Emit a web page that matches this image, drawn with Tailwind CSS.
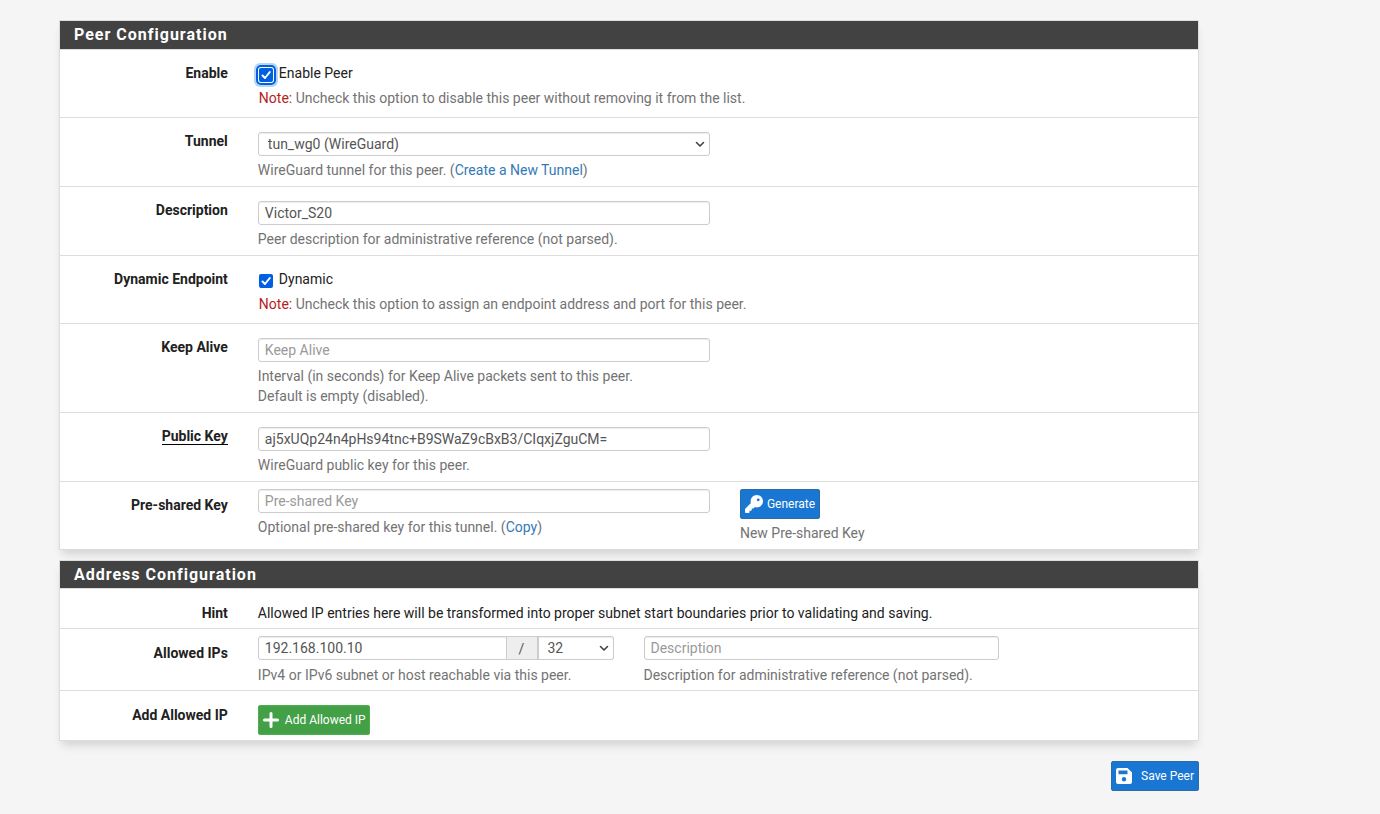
<!DOCTYPE html>
<html lang="en">
<head>
<meta charset="utf-8">
<meta name="viewport" content="width=device-width, initial-scale=1">
<title>Peer Configuration</title>
<script src="https://cdn.jsdelivr.net/npm/@tailwindcss/browser@4"></script>
</head>
<body class="bg-[#f5f5f5] font-[Roboto,sans-serif] text-sm leading-5 text-[#212121]">
<form class="ml-[59px] max-w-[1140px] pt-5">

  <section class="border border-[#ddd] bg-white shadow-[0_7px_9px_-3px_rgba(0,0,0,0.15)]">
    <h2 class="h-[29px] border-b border-[#ddd] bg-[#424242] px-[14px] text-base leading-7 font-bold tracking-[1px] text-white">Peer Configuration</h2>

    <div class="border-b border-[#ddd]">
      <div class="-mr-[9px] -ml-[10px] grid grid-cols-12 pt-[13px] pb-[9px]">
        <label for="enable" class="col-span-2 px-[15px] text-right font-bold">Enable</label>
        <div class="col-span-10 px-[15px]">
          <label class="flex items-center pl-px">
            <span class="mt-1 grid h-3.5 w-3.5 shrink-0">
              <input id="enable" type="checkbox" checked class="col-start-1 row-start-1 h-3.5 w-3.5 appearance-none rounded-[2px] bg-[#0060df] shadow-[0_0_0_1px_#fff,0_0_0_3px_#0060df,0_0_0_5px_#b3d7f8]">
              <svg class="pointer-events-none col-start-1 row-start-1 h-3.5 w-3.5" viewBox="0 0 14 14" fill="none" stroke="#fff" stroke-width="2" stroke-linecap="round" stroke-linejoin="round"><path d="M3.5 7.5L6 10l4.800-6"/></svg>
            </span>
            <span class="ml-[6px]">Enable Peer</span>
          </label>
          <p class="mt-[5px] pl-px text-[#737373]"><span class="text-[#b71c1c]">Note:</span> Uncheck this option to disable this peer without removing it from the list.</p>
        </div>
      </div>
    </div>

    <div class="border-b border-[#ddd]">
      <div class="-mr-[9px] -ml-[10px] grid grid-cols-12 pt-[13px] pb-1.5">
        <label for="tunnel" class="col-span-2 px-[15px] text-right font-bold">Tunnel</label>
        <div class="col-span-5 px-[15px] pt-px">
          <div class="grid">
            <select id="tunnel" class="col-start-1 row-start-1 h-6 w-full appearance-none rounded-[3px] border border-[#ccc] bg-white pl-[9px] pr-6 leading-5 text-[#555] shadow-[inset_0_1px_1px_rgba(0,0,0,0.075)]"><option>tun_wg0 (WireGuard)</option></select>
            <svg class="pointer-events-none col-start-1 row-start-1 mr-[5px] h-2.5 w-2.5 self-center justify-self-end" viewBox="0 0 10 10" fill="none" stroke="#444" stroke-width="1.600" stroke-linecap="round" stroke-linejoin="round"><path d="M1.500 3.500L5 7l3.500-3.500"/></svg>
          </div>
          <p class="mt-1 text-[#737373]">WireGuard tunnel for this peer. (<a href="#" class="text-[#337ab7]">Create a New Tunnel</a>)</p>
        </div>
      </div>
    </div>

    <div class="border-b border-[#ddd]">
      <div class="-mr-[9px] -ml-[10px] grid grid-cols-12 pt-[13px] pb-1.5">
        <label for="descr" class="col-span-2 px-[15px] text-right font-bold">Description</label>
        <div class="col-span-5 px-[15px] pt-px">
          <input id="descr" type="text" value="Victor_S20" class="block h-6 w-full rounded-[3px] border border-[#ccc] bg-white px-1.5 pb-px text-[#555] shadow-[inset_0_1px_1px_rgba(0,0,0,0.075)]">
          <p class="mt-1 text-[#737373]">Peer description for administrative reference (not parsed).</p>
        </div>
      </div>
    </div>

    <div class="border-b border-[#ddd]">
      <div class="-mr-[9px] -ml-[10px] grid grid-cols-12 pt-[13px] pb-[9px]">
        <label for="dynamic" class="col-span-2 px-[15px] text-right font-bold">Dynamic Endpoint</label>
        <div class="col-span-10 px-[15px]">
          <label class="flex items-center pl-px">
            <span class="mt-1 grid h-3.5 w-3.5 shrink-0">
              <input id="dynamic" type="checkbox" checked class="col-start-1 row-start-1 h-3.5 w-3.5 appearance-none rounded-[2px] bg-[#0060df]">
              <svg class="pointer-events-none col-start-1 row-start-1 h-3.5 w-3.5" viewBox="0 0 14 14" fill="none" stroke="#fff" stroke-width="2" stroke-linecap="round" stroke-linejoin="round"><path d="M3.5 7.5L6 10l4.800-6"/></svg>
            </span>
            <span class="ml-[6px]">Dynamic</span>
          </label>
          <p class="mt-[5px] pl-px text-[#737373]"><span class="text-[#b71c1c]">Note:</span> Uncheck this option to assign an endpoint address and port for this peer.</p>
        </div>
      </div>
    </div>

    <div class="border-b border-[#ddd]">
      <div class="-mr-[9px] -ml-[10px] grid grid-cols-12 pt-[13px] pb-1.5">
        <label for="keepalive" class="col-span-2 px-[15px] text-right font-bold">Keep Alive</label>
        <div class="col-span-5 px-[15px] pt-px">
          <input id="keepalive" type="text" placeholder="Keep Alive" class="block h-6 w-full rounded-[3px] border border-[#ccc] bg-white px-1.5 pb-px text-[#555] shadow-[inset_0_1px_1px_rgba(0,0,0,0.075)] placeholder:text-[#999]">
          <p class="mt-1 text-[#737373]">Interval (in seconds) for Keep Alive packets sent to this peer.<br>Default is empty (disabled).</p>
        </div>
      </div>
    </div>

    <div class="border-b border-[#ddd]">
      <div class="-mr-[9px] -ml-[10px] grid grid-cols-12 pt-[13px] pb-1.5">
        <label for="pubkey" class="col-span-2 px-[15px] text-right font-bold"><span class="border-b border-black">Public Key</span></label>
        <div class="col-span-5 px-[15px] pt-px">
          <input id="pubkey" type="text" value="aj5xUQp24n4pHs94tnc+B9SWaZ9cBxB3/CIqxjZguCM=" class="block h-6 w-full rounded-[3px] border border-[#ccc] bg-white px-1.5 pb-px text-[#555] shadow-[inset_0_1px_1px_rgba(0,0,0,0.075)]">
          <p class="mt-1 text-[#737373]">WireGuard public key for this peer.</p>
        </div>
      </div>
    </div>

    <div class="-mr-[9px] -ml-[10px] grid grid-cols-12 pt-[7px] pb-1.5">
      <label for="psk" class="col-span-2 px-[15px] pt-1.5 text-right font-bold">Pre-shared Key</label>
      <div class="col-span-5 px-[15px]">
        <input id="psk" type="text" placeholder="Pre-shared Key" class="block h-6 w-full rounded-[3px] border border-[#ccc] bg-white px-1.5 pb-px text-[#555] shadow-[inset_0_1px_1px_rgba(0,0,0,0.075)] placeholder:text-[#999]">
        <p class="mt-1 text-[#737373]">Optional pre-shared key for this tunnel. (<a href="#" class="text-[#337ab7]">Copy</a>)</p>
      </div>
      <div class="col-span-5 px-[15px]">
        <button type="button" class="flex h-[30px] items-center gap-1 rounded-[2px] border border-[#2e6da4] bg-[#1976d2] px-1 text-xs text-white">
          <svg class="h-[18px] w-[18px]" viewBox="0 0 512 512" fill="#fff"><path d="M336 352c97.200 0 176-78.800 176-176S433.200 0 336 0S160 78.800 160 176c0 18.700 2.900 36.800 8.300 53.700L7 391c-4.500 4.500-7 10.600-7 17v80c0 13.300 10.700 24 24 24h80c13.300 0 24-10.700 24-24v-40h40c13.300 0 24-10.700 24-24v-40h40c6.400 0 12.500-2.500 17-7l33.300-33.300c16.900 5.400 35 8.300 53.700 8.300zM376 96a40 40 0 1 1 0 80 40 40 0 1 1 0-80z"/></svg>
          Generate
        </button>
        <p class="mt-1 text-[#737373]">New Pre-shared Key</p>
      </div>
    </div>
  </section>

  <section class="mt-[10px] border border-[#ddd] bg-white shadow-[0_7px_9px_-3px_rgba(0,0,0,0.15)]">
    <h2 class="h-7 border-b border-[#ddd] bg-[#424242] px-[14px] text-base leading-7 font-bold tracking-[1px] text-white">Address Configuration</h2>

    <div class="border-b border-[#ddd]">
      <div class="-mr-[9px] -ml-[10px] grid grid-cols-12 pt-3.5 pb-[5px]">
        <div class="col-span-2 px-[15px] text-right font-bold">Hint</div>
        <p class="col-span-10 px-[15px]">Allowed IP entries here will be transformed into proper subnet start boundaries prior to validating and saving.</p>
      </div>
    </div>

    <div class="border-b border-[#ddd]">
      <div class="-mr-[9px] -ml-[10px] grid grid-cols-12 pt-[7px] pb-[5px]">
        <label for="address" class="col-span-2 px-[15px] pt-[7px] text-right font-bold">Allowed IPs</label>
        <div class="col-span-4 px-[15px]">
          <div class="flex">
            <input id="address" type="text" value="192.168.100.10" class="h-6 min-w-0 flex-1 rounded-l-[3px] border border-[#ccc] bg-white px-1.5 text-[#555] shadow-[inset_0_1px_1px_rgba(0,0,0,0.075)]">
            <span class="h-6 w-[30px] border-y border-[#ccc] bg-[#eee] text-center leading-6 text-[#555]">/</span>
            <span class="grid w-[77px]">
              <select aria-label="Subnet mask" class="col-start-1 row-start-1 h-6 w-full appearance-none rounded-r-[3px] border border-l-2 border-[#ccc] bg-white pl-[9px] pr-5 leading-5 text-[#555] shadow-[inset_0_1px_1px_rgba(0,0,0,0.075)]"><option>32</option></select>
              <svg class="pointer-events-none col-start-1 row-start-1 mr-[5px] h-2.5 w-2.5 self-center justify-self-end" viewBox="0 0 10 10" fill="none" stroke="#444" stroke-width="1.600" stroke-linecap="round" stroke-linejoin="round"><path d="M1.500 3.500L5 7l3.500-3.500"/></svg>
            </span>
          </div>
          <p class="mt-[5px] text-[#737373]">IPv4 or IPv6 subnet or host reachable via this peer.</p>
        </div>
        <div class="col-span-4 px-[15px]">
          <input type="text" aria-label="Description" placeholder="Description" class="block h-6 w-full rounded-[3px] border border-[#ccc] bg-white px-1.5 text-[#555] shadow-[inset_0_1px_1px_rgba(0,0,0,0.075)] placeholder:text-[#999]">
          <p class="mt-[5px] text-[#737373]">Description for administrative reference (not parsed).</p>
        </div>
      </div>
    </div>

    <div class="-mr-[9px] -ml-[10px] grid grid-cols-12 pt-3.5 pb-[5px]">
      <label for="addip" class="col-span-2 px-[15px] text-right font-bold">Add Allowed IP</label>
      <div class="col-span-10 px-[15px]">
        <button id="addip" type="button" class="flex h-[30px] items-center gap-[5px] rounded-[2px] border border-[#4caf50] bg-[#43a047] px-[3px] text-xs text-white">
          <svg class="h-[18px] w-[18px]" viewBox="0 0 18 18" fill="none" stroke="#fff" stroke-width="3" stroke-linecap="round"><path d="M9 2.500v13M2.500 9h13"/></svg>
          Add Allowed IP
        </button>
      </div>
    </div>
  </section>

  <div class="mt-5 flex justify-end">
    <button type="submit" class="flex h-[30px] items-center gap-[9px] rounded-[2px] border border-[#2e6da4] bg-[#1976d2] px-1 text-xs text-white">
      <svg class="h-4 w-4" viewBox="0 0 16 16" fill="#fff" fill-rule="evenodd"><path d="M2 0h9.500L16 4.500V14a2 2 0 0 1-2 2H2a2 2 0 0 1-2-2V2a2 2 0 0 1 2-2zM2.500 2.500v3.800h9V2.500zM8 9a2.200 2.200 0 1 0 0 4.400A2.200 2.200 0 0 0 8 9z"/></svg>
      Save Peer
    </button>
  </div>
</form>
</body>
</html>
